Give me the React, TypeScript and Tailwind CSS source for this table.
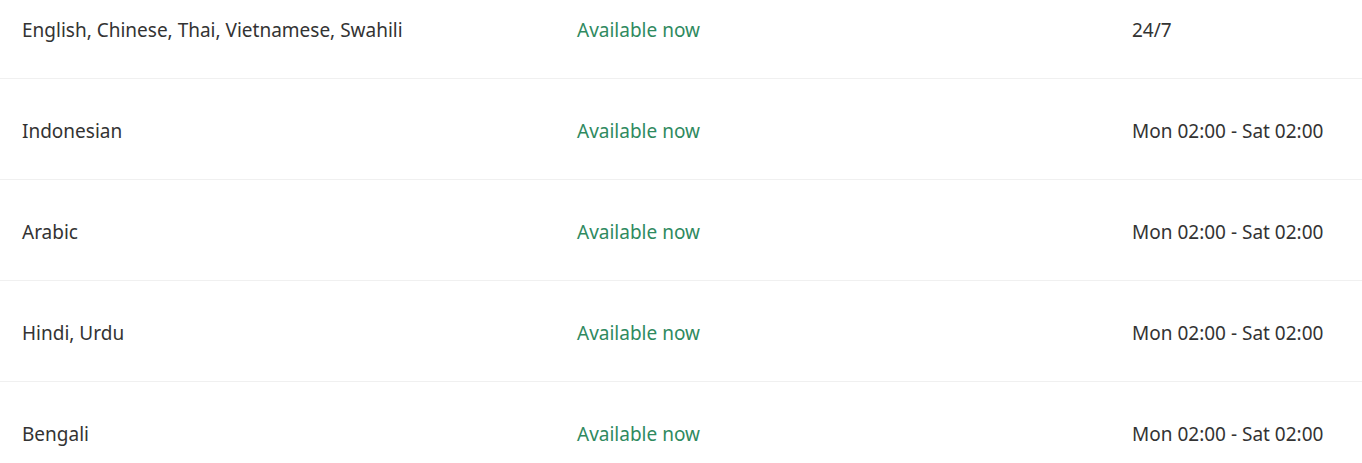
const rows = [
  { lang: "English, Chinese, Thai, Vietnamese, Swahili", hours: "24/7" },
  { lang: "Indonesian", hours: "Mon 02:00 - Sat 02:00" },
  { lang: "Arabic", hours: "Mon 02:00 - Sat 02:00" },
  { lang: "Hindi, Urdu", hours: "Mon 02:00 - Sat 02:00" },
  { lang: "Bengali", hours: "Mon 02:00 - Sat 02:00" },
];

export default function App() {
  return (
    <div className="h-[463px] overflow-hidden bg-white font-['Noto_Sans',sans-serif] text-[19px] text-[#333]">
      <div className="-mt-[22px]">
        {rows.map((row, i) => (
          <div
            key={i}
            className="grid h-[101px] grid-cols-[555px_555px_1fr] items-center border-b border-[#f0f0f0] pl-[22px] pt-[4px]"
          >
            <div>{row.lang}</div>
            <div className="text-[#2f8a5f]">Available now</div>
            <div>{row.hours}</div>
          </div>
        ))}
      </div>
    </div>
  );
}
